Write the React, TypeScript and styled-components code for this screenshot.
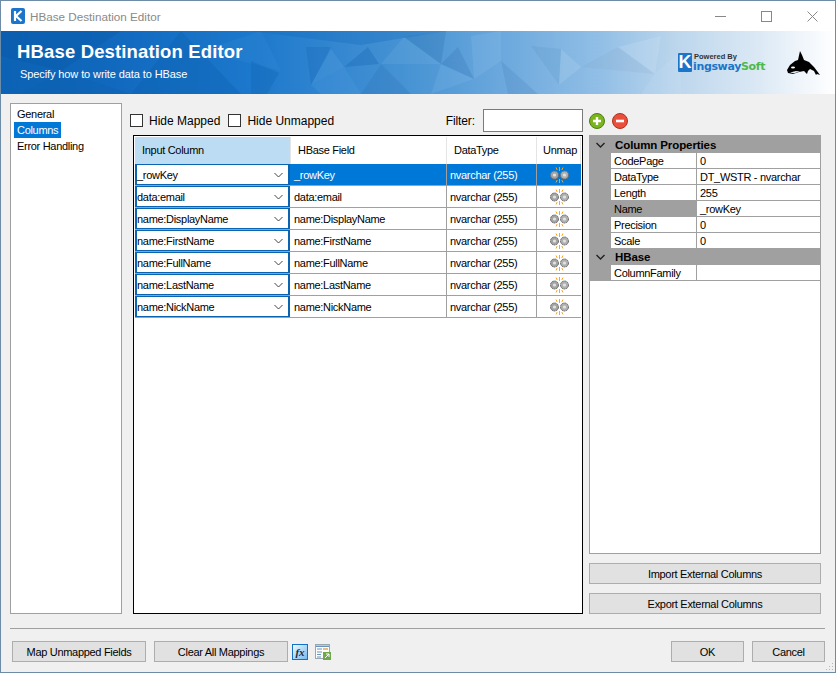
import styled, { createGlobalStyle } from 'styled-components';

const Global = createGlobalStyle`
  html, body { margin: 0; padding: 0; background: #f0f0f0; }
  body { font-family: "Liberation Sans", Arial, sans-serif; font-size: 11px; letter-spacing: -0.3px; color: #000; }
`;

const Window = styled.div`
  width: 836px;
  height: 673px;
  box-sizing: border-box;
  border: 1px solid #6d8ca8;
  display: flex;
  flex-direction: column;
  background: #f0f0f0;
  position: relative;
  overflow: hidden;
`;

const TitleBar = styled.div`
  height: 30px;
  background: #fff;
  display: flex;
  align-items: center;
  padding-left: 10px;
  flex: none;
`;

const TitleText = styled.span`
  margin-left: 5px;
  font-size: 11.7px;
  letter-spacing: 0;
  color: #8a8a8a;
`;

const WinButtons = styled.div`
  margin-left: auto;
  display: flex;
  height: 100%;
`;

const WinButton = styled.div`
  width: 46px;
  display: flex;
  align-items: center;
  justify-content: center;
`;

const Banner = styled.div`
  height: 63px;
  flex: none;
  position: relative;
  overflow: hidden;
  background: linear-gradient(90deg, #0c62b4 0%, #1068bd 12%, #1c78cc 30%, #4a95d4 50%, #6ba8dd 60%, #92bfe6 72%, #bcd6ec 81%, #dce9f5 91%, #fff 100%);
  display: flex;
  align-items: center;
  padding-left: 16px;
  color: #fff;
`;

const BannerArt = styled.svg`
  position: absolute;
  inset: 0;
`;

const BannerText = styled.div`
  position: relative;
  display: flex;
  flex-direction: column;
  margin-top: -2px;
`;

const BannerTitle = styled.div`
  font-size: 18.5px;
  line-height: 22px;
  font-weight: bold;
  letter-spacing: 0.15px;
`;

const BannerSub = styled.div`
  font-size: 11px;
  letter-spacing: -0.1px;
  line-height: 16px;
  margin-left: 3px;
  margin-top: 3px;
`;

const LogoArea = styled.div`
  position: relative;
  margin-left: auto;
  margin-right: 15px;
  display: flex;
  align-items: center;
`;

const KSquare = styled.div`
  width: 14px;
  height: 19px;
  background: #1b75c9;
  border-radius: 1px;
  color: #fff;
  font-size: 18px;
  letter-spacing: 0;
  font-weight: bold;
  line-height: 19px;
  text-align: center;
`;

const LogoWords = styled.div`
  margin-left: 1px;
  display: flex;
  flex-direction: column;
  width: 72px;
`;

const Powered = styled.div`
  font-size: 7.5px;
  letter-spacing: 0;
  font-weight: bold;
  color: #333;
  line-height: 8px;
  margin-left: 1px;
`;

const Brand = styled.div`
  font-family: "DejaVu Sans", sans-serif;
  font-size: 11px;
  line-height: 12px;
  font-weight: bold;
  white-space: nowrap;
  letter-spacing: -0.35px;
  color: #1b75c9;
`;

const BrandSoft = styled.span`
  color: #4fb848;
`;

const Orca = styled.svg`
  margin-left: 22px;
  display: block;
`;

const Body = styled.div`
  flex: 1;
  display: flex;
  flex-direction: column;
  min-height: 0;
`;

const Main = styled.div`
  display: flex;
  padding: 9px 0 0 9px;
  height: 520px;
  box-sizing: border-box;
`;

const NavList = styled.div`
  width: 112px;
  box-sizing: border-box;
  border: 1px solid #a0a0a0;
  background: #fff;
  padding: 2px 3px;
  display: flex;
  flex-direction: column;
  align-items: flex-start;
`;

const NavItem = styled.div<{ $active?: boolean }>`
  height: 16px;
  line-height: 16px;
  padding: 0 3px 0 3px;
  background: ${p => (p.$active ? '#0078d7' : 'transparent')};
  color: ${p => (p.$active ? '#fff' : '#000')};
`;

const Center = styled.div`
  width: 450px;
  margin-left: 11px;
  display: flex;
  flex-direction: column;
`;

const Toolbar = styled.div`
  height: 32px;
  flex: none;
  display: flex;
  align-items: center;
  padding-top: 3px;
  box-sizing: border-box;
  font-size: 12px;
  letter-spacing: 0;
`;

const CheckLabel = styled.label`
  display: flex;
  align-items: center;
`;

const CheckBox = styled.span`
  width: 13px;
  height: 13px;
  box-sizing: border-box;
  border: 1px solid #333;
  background: #fff;
  margin-right: 6px;
`;

const CheckGroup = styled.div`
  display: flex;
  gap: 8px;
  margin-left: -3px;
`;

const FilterLabel = styled.span`
  margin-left: auto;
  margin-right: 8px;
  letter-spacing: -0.1px;
`;

const FilterBox = styled.div`
  width: 100px;
  height: 23px;
  box-sizing: border-box;
  border: 1px solid #7a7a7a;
  background: #fff;
`;

const Grid = styled.div`
  flex: 1;
  border: 1px solid #000;
  padding: 1px;
  background: #fff;
  box-sizing: border-box;
`;

const cols = '156px 156px 90px 44px';

const HeaderRow = styled.div`
  display: grid;
  grid-template-columns: ${cols};
  height: 27px;
`;

const HeadCell = styled.div<{ $active?: boolean; $center?: boolean }>`
  display: flex;
  align-items: center;
  justify-content: ${p => (p.$center ? 'center' : 'flex-start')};
  padding: 0 0 2px ${p => (p.$center ? 3 : 7)}px;
  background: ${p => (p.$active ? '#bcdcf4' : '#fff')};
  border-right: 1px solid #e4e4e4;
  box-sizing: border-box;
`;

const Row = styled.div<{ $selected?: boolean }>`
  display: grid;
  grid-template-columns: ${cols};
  height: 22px;
  box-sizing: border-box;
  border-bottom: 1px solid #a0a0a0;
  background: ${p => (p.$selected ? '#0078d7' : '#fff')};
  color: ${p => (p.$selected ? '#fff' : '#000')};
`;

const ComboCell = styled.div`
  box-sizing: border-box;
  background: #fff;
  color: #000;
  border: 1px solid #0a64b0;
  border-left-width: 2px;
  border-right-width: 2px;
  margin-right: 1px;
  height: 21px;
  display: flex;
  align-items: center;
  justify-content: space-between;
  padding: 0 5px 0 0;
`;

const Cell = styled.div`
  box-sizing: border-box;
  border-right: 1px solid #a0a0a0;
  display: flex;
  align-items: center;
  padding-left: 3px;
  white-space: nowrap;
`;

const IconCell = styled(Cell)`
  justify-content: center;
  padding-left: 0;
  border-right: none;
`;

const Right = styled.div`
  width: 232px;
  margin-left: 6px;
  display: flex;
  flex-direction: column;
`;

const RightTools = styled.div`
  height: 32px;
  flex: none;
  display: flex;
  align-items: center;
  gap: 7px;
  padding-top: 3px;
  box-sizing: border-box;
`;

const PropPanel = styled.div`
  height: 419px;
  flex: none;
  box-sizing: border-box;
  border: 1px solid #a0a0a0;
  background: #fff;
  display: flex;
  flex-direction: column;
`;

const PropHead = styled.div<{ $h: number }>`
  height: ${p => p.$h}px;
  flex: none;
  background: #a0a0a0;
  display: flex;
  align-items: center;
  font-weight: bold;
  font-size: 11.5px;
  letter-spacing: -0.1px;
`;

const Gutter = styled.div`
  width: 21px;
  flex: none;
  display: flex;
  align-items: center;
  justify-content: center;
`;

const HeadLabel = styled.span`
  margin-left: 4px;
`;

const PropRow = styled.div`
  height: 16px;
  flex: none;
  display: flex;
  box-sizing: border-box;
  border-bottom: 1px solid #a0a0a0;
  background: #a0a0a0;
`;

const PropName = styled.div<{ $selected?: boolean }>`
  width: 86px;
  flex: none;
  box-sizing: border-box;
  padding-left: 3px;
  background: ${p => (p.$selected ? '#a0a0a0' : '#fff')};
  border-right: 1px solid #a0a0a0;
  line-height: 16px;
`;

const PropValue = styled.div`
  flex: 1;
  background: #fff;
  padding-left: 3px;
  line-height: 16px;
`;

const SideButton = styled.button`
  height: 21px;
  flex: none;
  margin-top: 9px;
  font: inherit;
  letter-spacing: inherit;
  color: #000;
  background: #e1e1e1;
  border: 1px solid #adadad;
  padding: 0;
`;

const Separator = styled.div`
  height: 1px;
  background: #a0a0a0;
  margin: 14px 10px 0 9px;
  flex: none;
`;

const Footer = styled.div`
  display: flex;
  align-items: center;
  padding: 12px 10px 0 11px;
`;

const FootButton = styled.button<{ $w: number }>`
  width: ${p => p.$w}px;
  height: 21px;
  font: inherit;
  letter-spacing: inherit;
  color: #000;
  background: #e1e1e1;
  border: 1px solid #adadad;
  padding: 0;
  margin-right: 8px;
`;

const IconGap = styled.div`
  display: flex;
  align-items: center;
  gap: 7px;
  margin-left: -4px;
`;

const FooterRight = styled.div`
  margin-left: auto;
  display: flex;
  gap: 8px;
`;

const Grip = styled.svg`
  position: absolute;
  right: 1px;
  bottom: 1px;
`;

const LastButton = styled(FootButton)`
  margin-right: 0;
`;

const GroupChevron = styled.svg`
  display: block;
`;

function Chevron() {
  return (
    <svg width="9" height="6" viewBox="0 0 9 6">
      <path d="M.5 1 4.5 5 8.5 1" fill="none" stroke="#444" strokeWidth="1" />
    </svg>
  );
}

function GroupArrow() {
  return (
    <GroupChevron width="9" height="6" viewBox="0 0 9 6">
      <path d="M.5 1 4.5 5 8.5 1" fill="none" stroke="#222" strokeWidth="1.4" />
    </GroupChevron>
  );
}

function Unmap() {
  return (
    <svg width="21" height="16" viewBox="0 0 21 16">
      <circle cx="5.5" cy="8" r="4" fill="#a4a4a4" stroke="#6f6f6f" strokeDasharray="2 .6" />
      <circle cx="5.5" cy="8" r="1.6" fill="#e2e2e2" />
      <circle cx="15.5" cy="8" r="4" fill="#b0b0b0" stroke="#6f6f6f" strokeDasharray="2 .6" />
      <circle cx="15.5" cy="8" r="1.6" fill="#e2e2e2" />
      <path d="M10.5 0v4M10.5 12v4M7 .5l1.2 2.5M14 .5l-1.2 2.5M7 15.5l1.2-2.5M14 15.5l-1.2-2.5" stroke="#f5a623" strokeWidth="1" />
    </svg>
  );
}

// facets of the banner's backdrop: points, fill, opacity
const facets: [string, string, number][] = [
  ['0,0 120,0 60,40 0,25', '#0a5aa8', 0.4],
  ['60,40 130,63 20,63', '#0a5aa8', 0.25],
  ['180,0 240,63 130,63', '#0b5cab', 0.3],
  ['200,20 260,0 280,40', '#3a90dc', 0.2],
  ['250,30 278,42 266,63 250,63', '#0a5aa8', 0.25],
  ['305,16 330,16 310,54', '#0f5fae', 0.25],
  ['330,18 343,36 310,54', '#62aeea', 0.22],
  ['367,16 343,36 378,33', '#0f5fae', 0.28],
  ['310,54 343,36 360,63 320,63', '#62aeea', 0.15],
  ['403,6 380,33 440,33', '#8ac2ee', 0.15],
  ['403,6 445,0 440,33', '#1f5f9f', 0.2],
  ['380,33 410,63 360,63', '#1f5f9f', 0.16],
  ['440,33 457,16 473,48', '#1f5f9f', 0.18],
  ['440,33 473,48 430,63', '#8ac2ee', 0.18],
  ['470,5 500,0 500,30 473,48', '#a8d0f0', 0.15],
  ['500,30 537,63 507,63', '#2f6ca5', 0.16],
  ['530,15 560,18 558,54', '#3b78b0', 0.12],
  ['560,18 580,36 558,54', '#cfe4f6', 0.18],
  ['580,36 617,16 654,43', '#7d9fbd', 0.14],
  ['617,16 660,5 654,43', '#e0eefa', 0.18],
  ['654,43 680,20 680,63 640,63', '#cfe4f6', 0.15],
  ['250,0 445,0 360,14', '#0f68bb', 0.3],
];

const rows = ['_rowKey', 'data:email', 'name:DisplayName', 'name:FirstName', 'name:FullName', 'name:LastName', 'name:NickName'];

const props = [
  ['CodePage', '0'],
  ['DataType', 'DT_WSTR - nvarchar'],
  ['Length', '255'],
  ['Name', '_rowKey'],
  ['Precision', '0'],
  ['Scale', '0'],
];

export default function App() {
  return (
    <Window>
      <Global />
      <TitleBar>
        <svg width="14" height="16" viewBox="0 0 14 16">
          <rect width="14" height="16" rx="2" fill="#1b75c9" />
          <path d="M4 3v10M10.5 3 5 8l5.5 5" fill="none" stroke="#fff" strokeWidth="2.2" />
        </svg>
        <TitleText>HBase Destination Editor</TitleText>
        <WinButtons>
          <WinButton>
            <svg width="11" height="11" viewBox="0 0 11 11"><path d="M0 5.5h11" stroke="#888" /></svg>
          </WinButton>
          <WinButton>
            <svg width="11" height="11" viewBox="0 0 11 11"><rect x=".5" y=".5" width="10" height="10" fill="none" stroke="#888" /></svg>
          </WinButton>
          <WinButton>
            <svg width="11" height="11" viewBox="0 0 11 11"><path d="M.5.5l10 10M10.5.5l-10 10" stroke="#888" /></svg>
          </WinButton>
        </WinButtons>
      </TitleBar>
      <Banner>
        <BannerArt width="834" height="63" viewBox="0 0 834 63">
          {facets.map(([pts, fill, opacity]) => (
            <polygon key={pts} points={pts} fill={fill} opacity={opacity} />
          ))}
        </BannerArt>
        <BannerText>
          <BannerTitle>HBase Destination Editor</BannerTitle>
          <BannerSub>Specify how to write data to HBase</BannerSub>
        </BannerText>
        <LogoArea>
          <KSquare>K</KSquare>
          <LogoWords>
            <Powered>Powered By</Powered>
            <Brand>ingsway<BrandSoft>Soft</BrandSoft></Brand>
          </LogoWords>
          <Orca width="33" height="24" viewBox="0 0 33 24">
            <path d="M0 19 3 14 8 10 11 9 13 0 15 4 17 9 22 11 27 16 30 20 33 24 30 23 29 24 27 20 23 18 21 20 20 23 17 20 12 21 6 23 1 22z" fill="#000" />
            <ellipse cx="6" cy="16.5" rx="2" ry=".9" fill="#fff" />
            <path d="M3 21.5 9 20 13 20.5 7 22.3z" fill="#dfe8f0" />
          </Orca>
        </LogoArea>
      </Banner>
      <Body>
        <Main>
          <NavList>
            <NavItem>General</NavItem>
            <NavItem $active>Columns</NavItem>
            <NavItem>Error Handling</NavItem>
          </NavList>
          <Center>
            <Toolbar>
              <CheckGroup>
                <CheckLabel><CheckBox />Hide Mapped</CheckLabel>
                <CheckLabel><CheckBox />Hide Unmapped</CheckLabel>
              </CheckGroup>
              <FilterLabel>Filter:</FilterLabel>
              <FilterBox />
            </Toolbar>
            <Grid>
              <HeaderRow>
                <HeadCell $active>Input Column</HeadCell>
                <HeadCell>HBase Field</HeadCell>
                <HeadCell>DataType</HeadCell>
                <HeadCell $center>Unmap</HeadCell>
              </HeaderRow>
              {rows.map((name, i) => (
                <Row key={name} $selected={i === 0}>
                  <ComboCell>{name}<Chevron /></ComboCell>
                  <Cell>{name}</Cell>
                  <Cell>nvarchar (255)</Cell>
                  <IconCell><Unmap /></IconCell>
                </Row>
              ))}
            </Grid>
          </Center>
          <Right>
            <RightTools>
              <svg width="16" height="16" viewBox="0 0 16 16">
                <circle cx="8" cy="8" r="7.5" fill="#7ab51d" stroke="#4f7d10" />
                <path d="M8 4v8M4 8h8" stroke="#fff" strokeWidth="2.4" />
              </svg>
              <svg width="16" height="16" viewBox="0 0 16 16">
                <circle cx="8" cy="8" r="7.5" fill="#ea4f3c" stroke="#b03020" />
                <path d="M4 8h8" stroke="#fff" strokeWidth="2.6" />
              </svg>
            </RightTools>
            <PropPanel>
              <PropHead $h={17}><Gutter><GroupArrow /></Gutter><HeadLabel>Column Properties</HeadLabel></PropHead>
              {props.map(([k, v]) => (
                <PropRow key={k}>
                  <Gutter />
                  <PropName $selected={k === 'Name'}>{k}</PropName>
                  <PropValue>{v}</PropValue>
                </PropRow>
              ))}
              <PropHead $h={16}><Gutter><GroupArrow /></Gutter><HeadLabel>HBase</HeadLabel></PropHead>
              <PropRow>
                <Gutter />
                <PropName>ColumnFamily</PropName>
                <PropValue />
              </PropRow>
            </PropPanel>
            <SideButton>Import External Columns</SideButton>
            <SideButton>Export External Columns</SideButton>
          </Right>
        </Main>
        <Separator />
        <Footer>
          <FootButton $w={134}>Map Unmapped Fields</FootButton>
          <FootButton $w={134}>Clear All Mappings</FootButton>
          <IconGap>
            <svg width="16" height="16" viewBox="0 0 16 16">
              <defs>
                <linearGradient id="fxFill" x1="0" y1="0" x2="1" y2="1">
                  <stop offset="0" stopColor="#f4faff" />
                  <stop offset="1" stopColor="#6db7f2" />
                </linearGradient>
              </defs>
              <rect x=".5" y=".5" width="15" height="15" fill="url(#fxFill)" stroke="#1470c4" />
              <text x="8" y="12" textAnchor="middle" fontFamily="Liberation Serif" fontStyle="italic" fontWeight="bold" fontSize="11" letterSpacing="0" fill="#1a2a3a">fx</text>
            </svg>
            <svg width="16" height="16" viewBox="0 0 16 16">
              <rect x=".5" y=".5" width="14" height="14" fill="#fdfdfd" stroke="#9aa6b0" />
              <path d="M1 1.5h13v1.5H1z" fill="#6b93bf" />
              <path d="M8 5h5" stroke="#e6a33a" strokeWidth="1.4" />
              <path d="M2 5h5M2 8h5M2 10.5h4M2 13h4" stroke="#6b93bf" strokeWidth="1.2" />
              <rect x="8" y="8" width="8" height="8" fill="#6fa84a" />
              <path d="M10 14l4-4M11 10h3v3" fill="none" stroke="#fff" />
            </svg>
          </IconGap>
          <FooterRight>
            <LastButton $w={73}>OK</LastButton>
            <LastButton $w={73}>Cancel</LastButton>
          </FooterRight>
        </Footer>
      </Body>
      <Grip width="10" height="10" viewBox="0 0 10 10">
        <path d="M8 2h1v1H8zM5 5h1v1H5zM8 5h1v1H8zM2 8h1v1H2zM5 8h1v1H5zM8 8h1v1H8z" fill="#b8b8b8" />
      </Grip>
    </Window>
  );
}
